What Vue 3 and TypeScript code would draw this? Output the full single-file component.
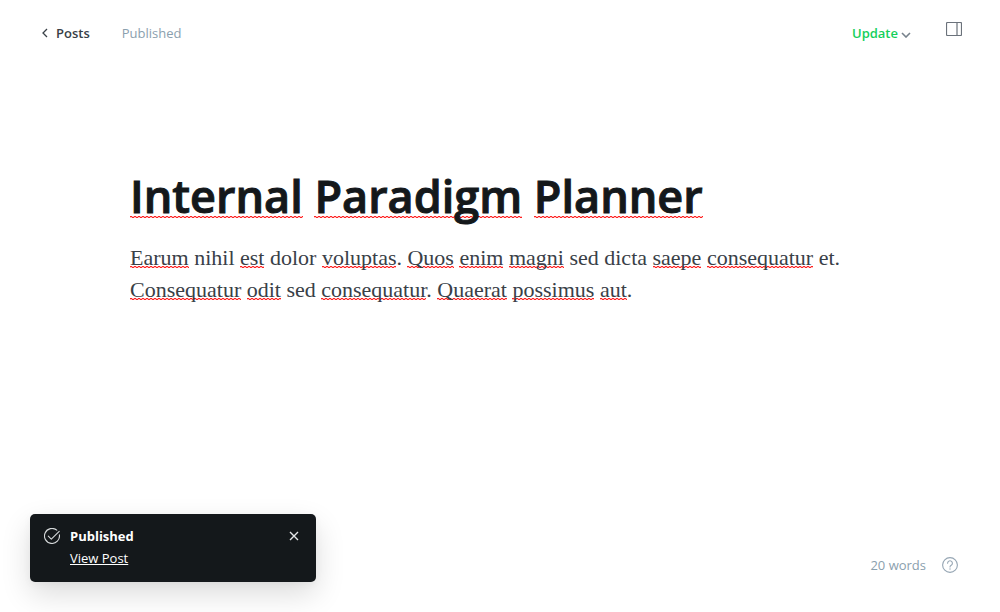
<script setup lang="ts">
import { ref } from 'vue'

interface Piece {
  text: string
  flagged: boolean
}

const toPieces = (marked: string): Piece[] =>
  marked
    .split('*')
    .map((text, i) => ({ text, flagged: i % 2 === 1 }))
    .filter((p) => p.text !== '')

const title = toPieces('*Internal* *Paradigm* *Planner*')
const body = toPieces(
  '*Earum* nihil *est* dolor *voluptas*. *Quos* *enim* *magni* sed dicta *saepe* *consequatur* et. ' +
    '*Consequatur* *odit* sed *consequatur*. *Quaerat* *possimus* *aut*.',
)
const toastOpen = ref(true)
</script>

<template>
  <div class="editor">
    <header class="topbar">
      <nav class="crumbs">
        <a href="#posts" class="back">
          <svg width="6" height="10" viewBox="0 0 6 10" fill="none" stroke="#394047" stroke-width="1.3" aria-hidden="true">
            <path d="M5 1 1 5l4 4" />
          </svg>
          <span>Posts</span>
        </a>
        <span class="status">Published</span>
      </nav>
      <div class="actions">
        <button type="button" class="update">
          <span>Update</span>
          <svg width="10" height="6" viewBox="0 0 10 6" fill="none" stroke="#77828c" stroke-width="1.6" aria-hidden="true">
            <path d="m1 1 4 4 4-4" />
          </svg>
        </button>
        <button type="button" class="panel" aria-label="Settings">
          <svg width="16" height="14" viewBox="0 0 16 14" fill="none" stroke="#6b727b" aria-hidden="true">
            <rect x=".5" y=".5" width="15" height="13" rx="1" stroke-width="1.2" />
            <path d="M11 .5v13" stroke-width="1.2" />
          </svg>
        </button>
      </div>
    </header>

    <main class="content">
      <h1 class="title" contenteditable="true" spellcheck="false"><span v-for="(p, i) in title" :key="i" :class="{ flagged: p.flagged }">{{ p.text }}</span></h1>
      <div class="body" contenteditable="true" spellcheck="false" role="textbox" aria-label="Post body" aria-multiline="true">
        <p><span v-for="(p, i) in body" :key="i" :class="{ flagged: p.flagged }">{{ p.text }}</span></p>
      </div>
    </main>

    <footer class="bottombar">
      <aside v-if="toastOpen" class="toast" role="status">
        <svg class="check" width="16" height="16" viewBox="0 0 16 16" fill="none" stroke="#d5d8da" stroke-width="1.1" stroke-linecap="round" stroke-linejoin="round" aria-hidden="true">
          <path d="M15.4 6.800A7.5 7.5 0 1 1 12.8 2.200" />
          <path d="m4.300 8.200 3 3L15.200 3.300" />
        </svg>
        <div class="message">
          <strong>Published</strong>
          <a href="#view">View Post</a>
        </div>
        <button type="button" class="close" aria-label="Close" @click="toastOpen = false">
          <svg width="10" height="10" viewBox="0 0 10 10" stroke="#e5e7e9" stroke-width="1.4" aria-hidden="true">
            <path d="m1 1 8 8M9 1 1 9" />
          </svg>
        </button>
      </aside>
      <div class="meta">
        <span>20 words</span>
        <a href="#help" class="help" aria-label="Help">
          <svg width="16" height="16" viewBox="0 0 16 16" fill="none" stroke="#95a5b3" stroke-width="1.1" aria-hidden="true">
            <circle cx="8" cy="8" r="7.4" />
            <path d="M5.6 6.2a2.4 2.4 0 1 1 3.6 2.1C8.3 8.8 8 9.1 8 10" stroke-linecap="round" />
            <circle cx="8" cy="12" r=".7" fill="#95a5b3" stroke="none" />
          </svg>
        </a>
      </div>
    </footer>
  </div>
</template>

<style>
body {
  margin: 0;
  background: #fff;
}
</style>

<style scoped>
.editor {
  box-sizing: border-box;
  min-height: 100vh;
  display: flex;
  flex-direction: column;
  font-family: "Segoe UI", "Open Sans", "Noto Sans", sans-serif;
  font-size: 13px;
  line-height: 20px;
  color: #394047;
}
button {
  display: flex;
  border: 0;
  padding: 0;
  background: none;
  font: inherit;
  cursor: pointer;
}
svg {
  display: block;
  flex: none;
}
.topbar {
  display: flex;
  justify-content: space-between;
  padding: 22px 38px 0 42px;
}
.crumbs,
.actions {
  display: flex;
  align-items: flex-start;
}
.crumbs {
  gap: 32px;
  padding-top: 1px;
}
.back {
  display: flex;
  align-items: center;
  gap: 8px;
  color: #394047;
  font-weight: 600;
  text-decoration: none;
}
.status {
  color: #8ba0ae;
}
.actions {
  gap: 35px;
}
.update {
  align-items: center;
  gap: 3px;
  padding-top: 1px;
  color: #14cf5b;
  font-weight: 600;
}
.update svg {
  margin-top: 3px;
}
.content {
  box-sizing: border-box;
  width: 100%;
  max-width: 740px;
  margin: 121px auto 0;
  flex: 1;
}
.title {
  margin: 0;
  color: #14181b;
  font-size: 45px;
  font-weight: 600;
  line-height: 64px;
  -webkit-text-stroke: 1px #14181b;
  outline: none;
}
.body {
  margin-top: 14px;
  font-family: Georgia, "Liberation Serif", serif;
  font-size: 22px;
  line-height: 32px;
  outline: none;
}
.body p {
  margin: 0;
}
.flagged {
  --mark: 2px;
  background-image:
    repeating-linear-gradient(90deg, #f22 0 2px, #fbb 2px 4px),
    repeating-linear-gradient(90deg, #fbb 0 2px, #f22 2px 4px);
  background-size: 100% 1px, 100% 1px;
  background-position: 0 calc(100% - var(--mark) - 1px), 0 calc(100% - var(--mark));
  background-repeat: no-repeat;
}
.title .flagged {
  --mark: 8px;
}
.bottombar {
  display: flex;
  justify-content: space-between;
  align-items: flex-end;
  padding: 0 42px 30px 30px;
}
.toast {
  box-sizing: border-box;
  width: 286px;
  display: flex;
  align-items: flex-start;
  padding: 12px 17px 14px 14px;
  border-radius: 5px;
  background: #14181b;
  color: #fff;
  box-shadow: 0 12px 30px rgba(0, 0, 0, 0.14), 0 2px 8px rgba(0, 0, 0, 0.04);
}
.check {
  margin-top: 2px;
}
.message {
  display: flex;
  flex: 1;
  flex-direction: column;
  gap: 2px;
  margin-left: 10px;
}
.message a {
  align-self: flex-start;
  color: #fff;
}
.close {
  margin-top: 5px;
}
.meta {
  display: flex;
  align-items: center;
  gap: 16px;
  margin-left: auto;
  padding-bottom: 7px;
  color: #8ba0ae;
}
</style>
